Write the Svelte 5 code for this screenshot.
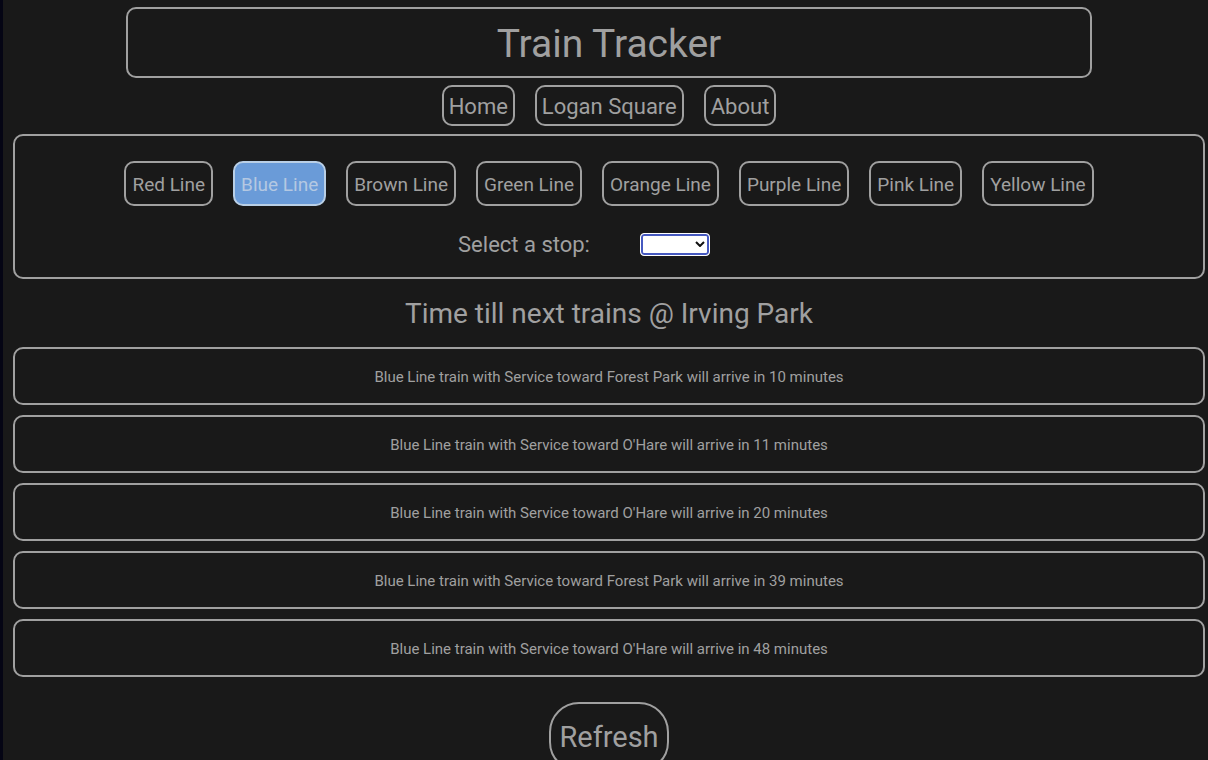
<script>
  const places = ['Home', 'Logan Square', 'About'];
  const lines = ['Red', 'Blue', 'Brown', 'Green', 'Orange', 'Purple', 'Pink', 'Yellow'];
  const stops = ['', 'Irving Park', 'Logan Square', "O'Hare", 'Forest Park'];
  const arrivals = [
    { to: 'Forest Park', minutes: 10 },
    { to: "O'Hare", minutes: 11 },
    { to: "O'Hare", minutes: 20 },
    { to: 'Forest Park', minutes: 39 },
    { to: "O'Hare", minutes: 48 }
  ];
  let selected = $state('Blue');
  let stop = $state('');
</script>

<div class="page">
  <header><h1>Train Tracker</h1></header>
  <nav>
    {#each places as place}<a href="#top">{place}</a>{/each}
  </nav>
  <section class="picker">
    <div class="lines">
      {#each lines as line}
        <button class="line" class:active={line === selected} onclick={() => (selected = line)}>{line} Line</button>
      {/each}
    </div>
    <div class="stop">
      <label for="stop">Select a stop:</label>
      <span class="field">
        <select id="stop" bind:value={stop}>
          {#each stops as s}<option value={s}>{s}</option>{/each}
        </select>
        <svg viewBox="0 0 10 6" aria-hidden="true"><path d="M1 1l4 4 4-4" /></svg>
      </span>
    </div>
  </section>
  <h2>Time till next trains @ Irving Park</h2>
  <ul>
    {#each arrivals as a}
      <li>Blue Line train with Service toward {a.to} will arrive in {a.minutes} minutes</li>
    {/each}
  </ul>
  <button class="refresh">Refresh</button>
</div>

<style>
  :global(body) { background: #191919; }
  .page {
    box-sizing: border-box;
    display: flex;
    flex-direction: column;
    align-items: center;
    min-height: 100vh;
    padding: 7px 3px 8px 10px;
    border-left: 3px solid #050514;
    background: #191919;
    color: #a0a0a0;
    font-family: Roboto, Inter, sans-serif;
    font-size: 15px;
  }
  header, a, .picker, li, button {
    box-sizing: border-box;
    border: 2px solid #a0a0a0;
    border-radius: 10px;
  }
  header { width: 81%; padding: 12px 10px 8px; text-align: center; }
  h1, h2 { margin: 0; font-weight: 400; }
  h1 { font-size: 39px; line-height: 47px; }
  nav { display: flex; gap: 20px; margin: 7px 0 8px; }
  a { padding: 6px 5px 4px; color: inherit; font-size: 22px; line-height: 27px; text-decoration: none; }
  button { background: transparent; color: inherit; font-family: inherit; cursor: pointer; white-space: nowrap; }
  .picker { width: 100%; padding: 25px 0 19px; }
  .lines { display: flex; flex-wrap: wrap; justify-content: center; gap: 20px; }
  .line { padding: 2px 6px 0; font-size: 19px; line-height: 39px; }
  .active { background: #6a9bd8; border-color: #b9cfe6; color: #b4c8e2; }
  .stop { display: flex; align-items: center; justify-content: center; gap: 50px; margin-top: 25px; padding-right: 50px; font-size: 22px; line-height: 27px; }
  .field { position: relative; display: flex; }
  select { appearance: none; box-sizing: border-box; width: 70px; height: 23px; border: 1px solid #fff; border-radius: 4px; background: #fff; box-shadow: inset 0 0 0 2px #4659c0; outline: none; }
  svg { position: absolute; right: 5px; top: 8px; width: 10px; height: 6px; fill: none; stroke: #111; stroke-width: 2; pointer-events: none; }
  h2 { margin: 17px 0 15px; font-size: 28px; line-height: 36px; }
  ul { display: grid; gap: 10px; width: 100%; margin: 0; padding: 0; list-style: none; }
  li { padding: 18px 17px 16px; line-height: 20px; text-align: center; }
  .refresh { margin-top: 25px; padding: 14px 8px; border-radius: 30px; font-size: 29px; line-height: 38px; }
</style>
